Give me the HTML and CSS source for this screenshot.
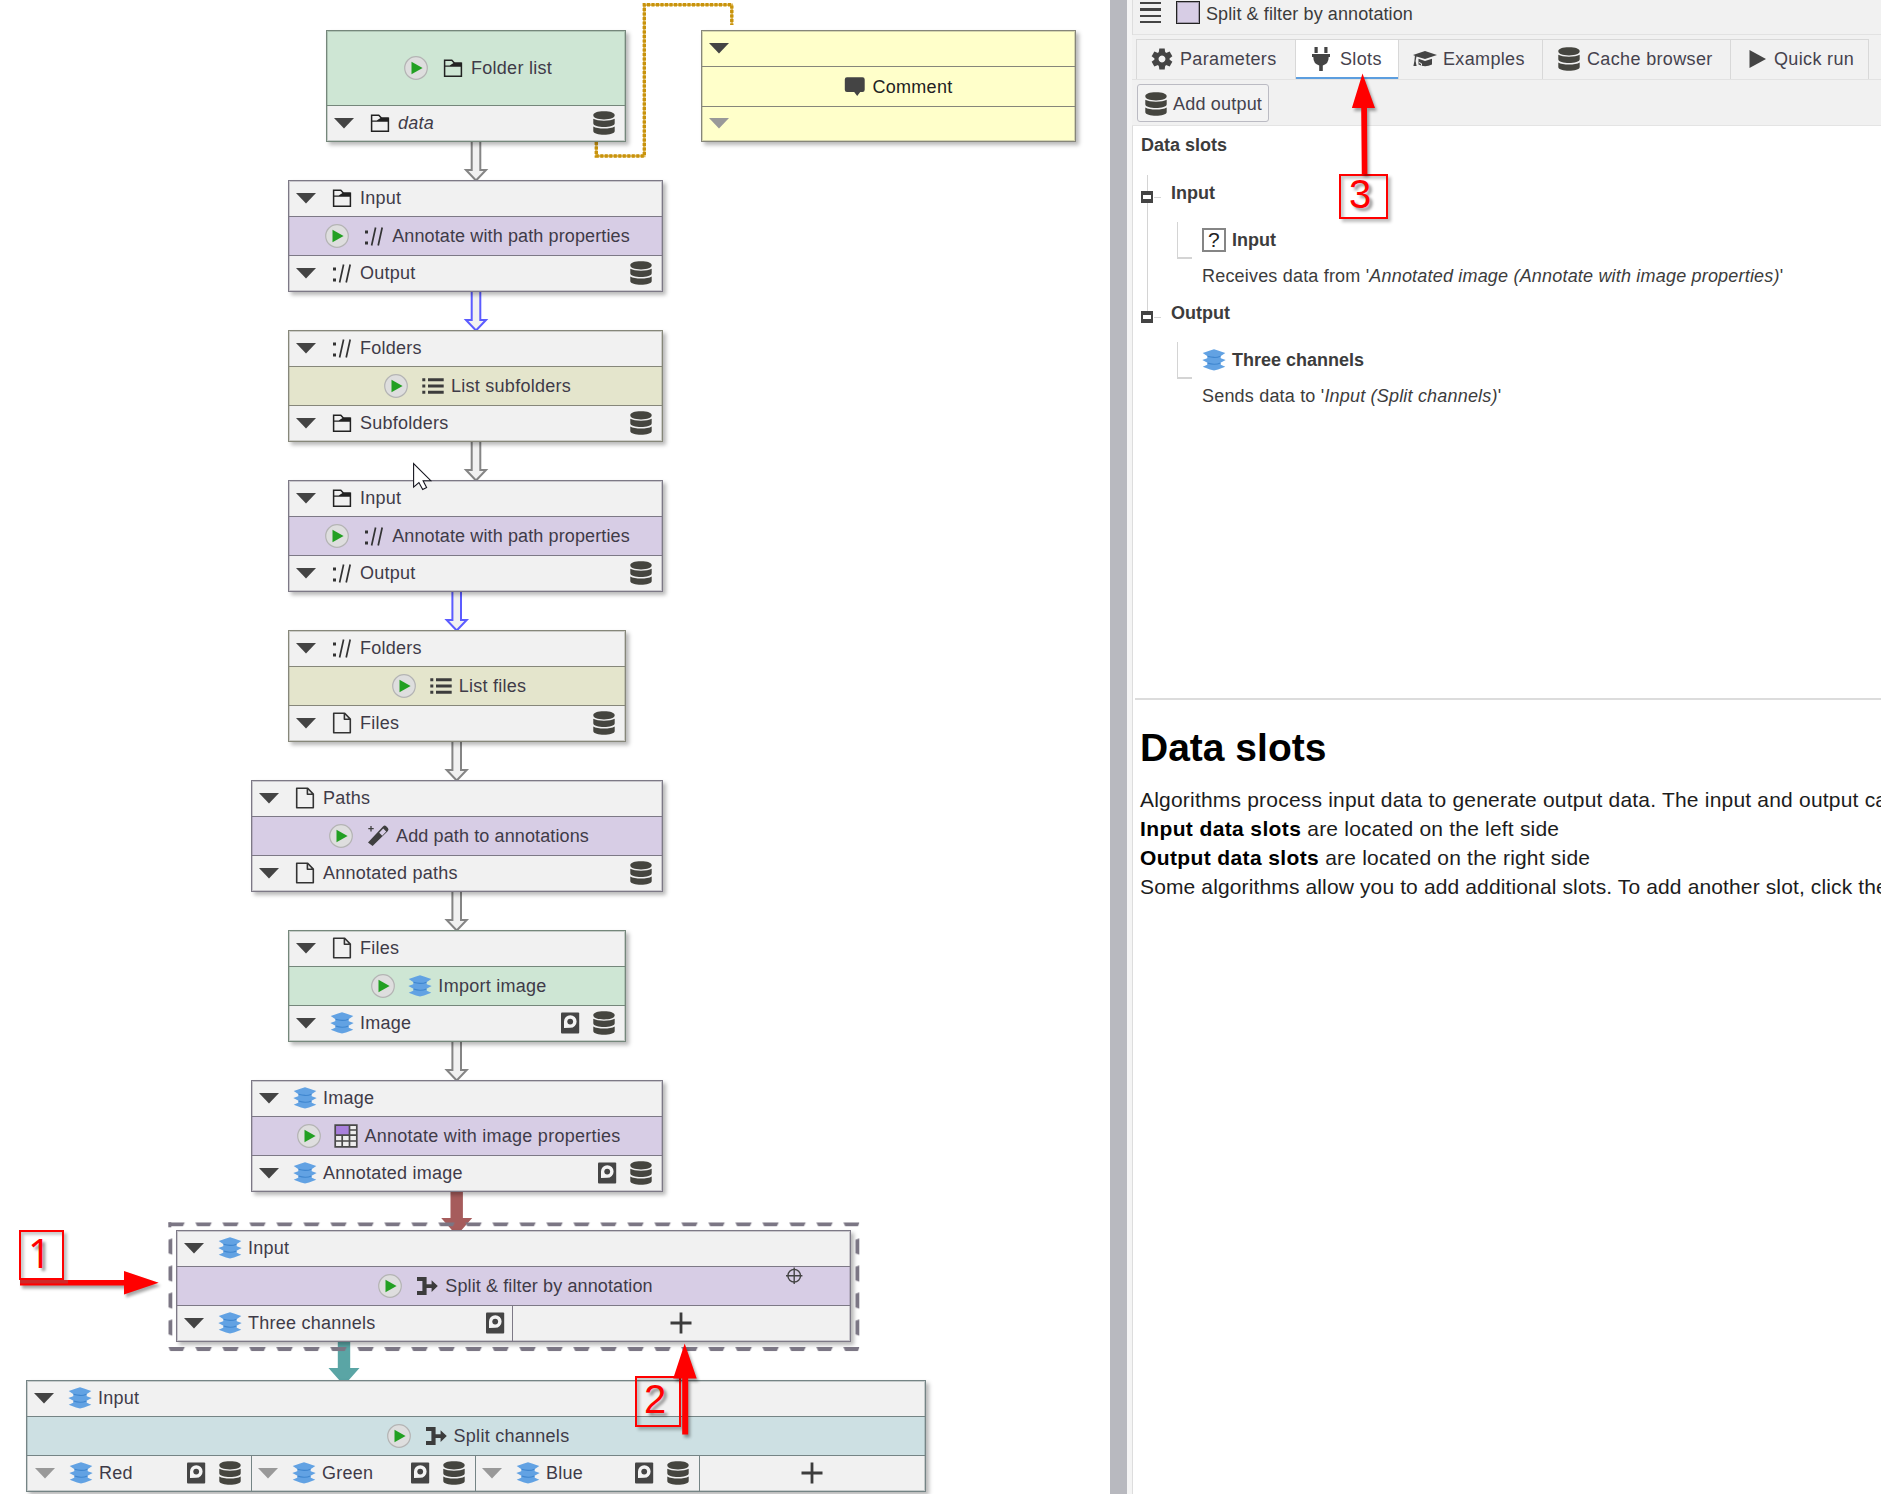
FILE: index.html
```html
<!DOCTYPE html>
<html lang="en">
<head>
<meta charset="utf-8">
<title>Pipeline editor</title>
<link rel="stylesheet" href="styles.css">
</head>
<body>
<svg class="defs" aria-hidden="true">
  <defs>
    <symbol id="i-tri" viewBox="0 0 24 24"><path d="M2 7h20L12 17.500z"/></symbol>
    <symbol id="i-folder" viewBox="0 0 24 24"><path fill="none" stroke="#222" stroke-width="1.5" d="M3.6 20.2V4.2h7.2l2.8 3h6.8v13z"/><path fill="#222" d="M3.5 9.6h5.2l4.6-3.2h7.3v4.4H9.2L3.5 10.8z"/></symbol>
    <symbol id="i-path" viewBox="0 0 24 24"><path fill="#333" d="M3 6.5h3v3H3zM3 17.5h3v3H3z"/><path fill="none" stroke="#333" stroke-width="1.7" d="M9.600 21.500L13.600 3.500M16.200 21.500L20.200 3.500"/></symbol>
    <symbol id="i-file" viewBox="0 0 24 24"><path fill="none" stroke="#333" stroke-width="1.6" stroke-linejoin="round" d="M3.7 2.3h11l5.6 5.8v13.6H3.7zM14.4 2.3v6h6"/></symbol>
    <symbol id="i-stack" viewBox="0 0 24 24"><path fill="#62a2e3" d="M12 1.200L16 2.500Q19.500 3.800 23.300 5L18.500 8.200 18.800 10.200 23.700 12 18.500 14.800 18.800 16.800 23.300 18.800 16 21.400 12 22.600 8 21.400.7 18.800 5.200 16.800 5.500 14.800.3 12 5.200 10.200 5.500 8.200.7 5Q4.500 3.800 8 2.500z"/><path fill="none" stroke="#3f86cf" stroke-width="1.100" d="M5.500 8.200Q9 9.200 12 9.400T18.500 8.200M5.500 14.900Q9 16 12 16.200T18.500 14.900"/></symbol>
    <symbol id="i-db" viewBox="0 0 24 24"><path fill="#45453f" d="M1.3 4.3C1.3 1.8 5.5.3 12 .3s10.700 1.500 10.700 4S18.500 8.400 12 8.400 1.300 6.800 1.300 4.300zM1.300 7.700C5.500 10.300 18.500 10.300 22.700 7.700v4.500c0 5-21.400 5-21.400 0zM1.300 15.400C5.500 18.200 18.500 18.200 22.700 15.400v4.500c0 5-21.400 5-21.400 0z"/></symbol>
    <symbol id="i-cache" viewBox="0 0 24 24"><rect x="3" y="1.500" width="18.200" height="21" rx="1" fill="#454545"/><path fill="#f4f4f4" d="M6 17V10.500a6.300 6.300 0 1 1 6.300 6.300z"/><circle cx="12.200" cy="10.600" r="2.900" fill="#454545"/></symbol>
    <symbol id="i-play" viewBox="0 0 24 24"><circle cx="12" cy="12" r="11.300" fill="#dedede" stroke="#b4b4b4" stroke-width="1.200"/><path fill="#22a022" d="M7.500 5.800L18.600 12 7.500 18.200z"/></symbol>
    <symbol id="i-list" viewBox="0 0 24 24"><path fill="#3c3c3c" d="M1.300 4.200h3v3h-3zM1.300 10.500h3v3h-3zM1.300 16.800h3v3h-3zM7 4.200h15.700v3H7zM7 10.500h15.700v3H7zM7 16.800h15.700v3H7z"/></symbol>
    <symbol id="i-wand" viewBox="0 0 24 24"><path fill="#3f3f3f" fill-rule="evenodd" d="M2 18.500L17.200 2.200q1.500-1.300 3 0l1.700 1.700q1.200 1.500 0 3L6.600 22zM13.200 8.800l3 3 4-4.400-3-3z"/><path fill="none" stroke="#3f3f3f" stroke-width="1.300" d="M5 2v5.500M2.300 4.700h5.400"/></symbol>
    <symbol id="i-table" viewBox="0 0 24 24"><path fill="#eee" d="M1 1h22v22H1z"/><path fill="#a880dc" d="M1 1h14.500v10H1z"/><path fill="none" stroke="#4a4a4a" stroke-width="1.700" d="M1.200 1.200h21.600v21.600H1.200zM15.500 1v22M8.200 11v12M1 11.200h22M15.500 6h7.500M1 17h22"/></symbol>
    <symbol id="i-split" viewBox="0 0 24 24"><path fill="#3c3c3c" d="M2 3h9.600v7.200h5V6.200L22.800 12l-6.200 6v-4h-5v7H2v-4h5.400V7H2z"/></symbol>
    <symbol id="i-plus" viewBox="0 0 24 24"><path fill="#3c3c3c" d="M10.600 1.500h2.800v9.100h9.100v2.800h-9.100v9.100h-2.800v-9.100H1.500v-2.800h9.100z"/></symbol>
    <symbol id="i-comment" viewBox="0 0 24 24"><path fill="#444" d="M4 2.200h15.500q2.200 0 2.200 2.200v10.400q0 2.200-2.200 2.200h-2.300l-3 4-3-4H4q-2.200 0-2.200-2.200V4.400Q1.800 2.200 4 2.200z"/></symbol>
    <symbol id="i-gear" viewBox="0 0 24 24"><g fill="#444"><path fill-rule="evenodd" d="M12 4.500a7.500 7.500 0 1 0 .01 0zM12 8.600a3.400 3.400 0 1 1-.01 0z"/><path id="tooth" d="M9.300 1.600h5.400l.6 4.500H8.700z"/><use href="#tooth" transform="rotate(60 12 12)"/><use href="#tooth" transform="rotate(120 12 12)"/><use href="#tooth" transform="rotate(180 12 12)"/><use href="#tooth" transform="rotate(240 12 12)"/><use href="#tooth" transform="rotate(300 12 12)"/></g></symbol>
    <symbol id="i-plug" viewBox="0 0 24 24"><path fill="#444" d="M5.500 0h3.200v6H5.500zM15.300 0h3.200v6h-3.200zM3 7h18v3h-1.300q0 7-5.900 8.400V24h-3.600v-5.600Q4.300 17 4.300 10H3z"/></symbol>
    <symbol id="i-cap" viewBox="0 0 24 24"><path fill="#444" d="M12 4l12 4-12 4L3.500 9.400 2.600 14l1 5H.4l1-5 .5-5.200L0 8zM5.500 11.700L12 14l7-2.300v5.800q-7 3.600-13.500 0z"/><path fill="none" stroke="#f1f1f1" stroke-width="1" d="M6 15.500l2.500 1.200v2"/></symbol>
    <symbol id="i-run" viewBox="0 0 24 24"><path fill="#444" d="M5.500 3l16.500 9L5.500 21z"/></symbol>
  </defs>
</svg>

<div class="app">
<main class="canvas">
  <svg class="edges" width="1110" height="1494" viewBox="0 0 1110 1494">
    <defs>
      <g id="arrow"><path fill="#f1f1f1" stroke="none" d="M-4.500 0h9v29h5.500L0 40-10 29h5.500z"/><path fill="none" stroke-width="2" d="M-4.300 0v29h-5.700L0 39.500 10 29H4.300V0"/></g>
      <g id="solid"><path d="M-6.200 0H6.200v27h9.300L4 40H-4L-15.500 27h9.300z"/></g>
    </defs>
    <g stroke="#858585">
      <use href="#arrow" x="476" y="141"/><use href="#arrow" x="476" y="441"/><use href="#arrow" x="456.700" y="741"/><use href="#arrow" x="456.700" y="891"/><use href="#arrow" x="456.700" y="1041"/>
    </g>
    <g stroke="#5c5cff"><use href="#arrow" x="476" y="291"/><use href="#arrow" x="456.700" y="591"/></g>
    <use href="#solid" x="456.700" y="1191" fill="#a65c5c"/>
    <use href="#solid" x="344" y="1341" fill="#5aa5a5"/>
    <path fill="none" stroke="#dfb95c" stroke-width="2.500" d="M596.300 142v14H644.300V4.700h87.500V25"/>
    <path fill="none" stroke="#c8930c" stroke-width="3.400" stroke-dasharray="3 1.500" d="M596.300 142v14H644.300V4.700h87.500V25"/>
  </svg>

  <section class="node green n0">
    <div class="mid"><svg class="i"><use href="#i-play"/></svg><svg class="i gap"><use href="#i-folder"/></svg><span>Folder list</span></div>
    <div class="row"><svg class="i tri"><use href="#i-tri"/></svg><svg class="i"><use href="#i-folder"/></svg><span class="lab"><i>data</i></span><svg class="i"><use href="#i-db"/></svg></div>
  </section>
  <section class="node comment n1">
    <div class="row"><svg class="i tri"><use href="#i-tri"/></svg></div>
    <div class="mid"><svg class="i"><use href="#i-comment"/></svg><span>Comment</span></div>
    <div class="row"><svg class="i tri off"><use href="#i-tri"/></svg></div>
  </section>
  <section class="node purple n2">
    <div class="row"><svg class="i tri"><use href="#i-tri"/></svg><svg class="i"><use href="#i-folder"/></svg><span class="lab">Input</span></div>
    <div class="mid snug"><svg class="i"><use href="#i-play"/></svg><svg class="i gap"><use href="#i-path"/></svg><span>Annotate with path properties</span></div>
    <div class="row"><svg class="i tri"><use href="#i-tri"/></svg><svg class="i"><use href="#i-path"/></svg><span class="lab">Output</span><svg class="i"><use href="#i-db"/></svg></div>
  </section>
  <section class="node olive n3">
    <div class="row"><svg class="i tri"><use href="#i-tri"/></svg><svg class="i"><use href="#i-path"/></svg><span class="lab">Folders</span></div>
    <div class="mid"><svg class="i"><use href="#i-play"/></svg><svg class="i gap"><use href="#i-list"/></svg><span>List subfolders</span></div>
    <div class="row"><svg class="i tri"><use href="#i-tri"/></svg><svg class="i"><use href="#i-folder"/></svg><span class="lab">Subfolders</span><svg class="i"><use href="#i-db"/></svg></div>
  </section>
  <section class="node purple n4">
    <div class="row"><svg class="i tri"><use href="#i-tri"/></svg><svg class="i"><use href="#i-folder"/></svg><span class="lab">Input</span></div>
    <div class="mid snug"><svg class="i"><use href="#i-play"/></svg><svg class="i gap"><use href="#i-path"/></svg><span>Annotate with path properties</span></div>
    <div class="row"><svg class="i tri"><use href="#i-tri"/></svg><svg class="i"><use href="#i-path"/></svg><span class="lab">Output</span><svg class="i"><use href="#i-db"/></svg></div>
  </section>
  <section class="node olive n5">
    <div class="row"><svg class="i tri"><use href="#i-tri"/></svg><svg class="i"><use href="#i-path"/></svg><span class="lab">Folders</span></div>
    <div class="mid"><svg class="i"><use href="#i-play"/></svg><svg class="i gap"><use href="#i-list"/></svg><span>List files</span></div>
    <div class="row"><svg class="i tri"><use href="#i-tri"/></svg><svg class="i"><use href="#i-file"/></svg><span class="lab">Files</span><svg class="i"><use href="#i-db"/></svg></div>
  </section>
  <section class="node purple n6">
    <div class="row"><svg class="i tri"><use href="#i-tri"/></svg><svg class="i"><use href="#i-file"/></svg><span class="lab">Paths</span></div>
    <div class="mid snug"><svg class="i"><use href="#i-play"/></svg><svg class="i gap"><use href="#i-wand"/></svg><span>Add path to annotations</span></div>
    <div class="row"><svg class="i tri"><use href="#i-tri"/></svg><svg class="i"><use href="#i-file"/></svg><span class="lab">Annotated paths</span><svg class="i"><use href="#i-db"/></svg></div>
  </section>
  <section class="node green n7">
    <div class="row"><svg class="i tri"><use href="#i-tri"/></svg><svg class="i"><use href="#i-file"/></svg><span class="lab">Files</span></div>
    <div class="mid"><svg class="i"><use href="#i-play"/></svg><svg class="i gap"><use href="#i-stack"/></svg><span>Import image</span></div>
    <div class="row"><svg class="i tri"><use href="#i-tri"/></svg><svg class="i"><use href="#i-stack"/></svg><span class="lab">Image</span><svg class="i cache"><use href="#i-cache"/></svg><svg class="i"><use href="#i-db"/></svg></div>
  </section>
  <section class="node purple n8">
    <div class="row"><svg class="i tri"><use href="#i-tri"/></svg><svg class="i"><use href="#i-stack"/></svg><span class="lab">Image</span></div>
    <div class="mid"><svg class="i"><use href="#i-play"/></svg><svg class="i gap"><use href="#i-table"/></svg><span>Annotate with image properties</span></div>
    <div class="row"><svg class="i tri"><use href="#i-tri"/></svg><svg class="i"><use href="#i-stack"/></svg><span class="lab">Annotated image</span><svg class="i cache"><use href="#i-cache"/></svg><svg class="i"><use href="#i-db"/></svg></div>
  </section>
  <section class="node purple n9">
    <div class="row"><svg class="i tri"><use href="#i-tri"/></svg><svg class="i"><use href="#i-stack"/></svg><span class="lab">Input</span></div>
    <div class="mid snug"><svg class="i"><use href="#i-play"/></svg><svg class="i gap"><use href="#i-split"/></svg><span>Split &amp; filter by annotation</span></div>
    <div class="cells split2">
      <div class="row tight"><svg class="i tri"><use href="#i-tri"/></svg><svg class="i"><use href="#i-stack"/></svg><span class="lab">Three channels</span><svg class="i"><use href="#i-cache"/></svg></div>
      <div class="add"><svg class="i"><use href="#i-plus"/></svg></div>
    </div>
  </section>
  <section class="node teal n10">
    <div class="row"><svg class="i tri"><use href="#i-tri"/></svg><svg class="i"><use href="#i-stack"/></svg><span class="lab">Input</span></div>
    <div class="mid"><svg class="i"><use href="#i-play"/></svg><svg class="i gap"><use href="#i-split"/></svg><span>Split channels</span></div>
    <div class="cells split4">
      <div class="row first"><svg class="i tri off"><use href="#i-tri"/></svg><svg class="i"><use href="#i-stack"/></svg><span class="lab">Red</span><svg class="i cache"><use href="#i-cache"/></svg><svg class="i"><use href="#i-db"/></svg></div>
      <div class="row"><svg class="i tri off"><use href="#i-tri"/></svg><svg class="i"><use href="#i-stack"/></svg><span class="lab">Green</span><svg class="i cache"><use href="#i-cache"/></svg><svg class="i"><use href="#i-db"/></svg></div>
      <div class="row"><svg class="i tri off"><use href="#i-tri"/></svg><svg class="i"><use href="#i-stack"/></svg><span class="lab">Blue</span><svg class="i cache"><use href="#i-cache"/></svg><svg class="i"><use href="#i-db"/></svg></div>
      <div class="add"><svg class="i"><use href="#i-plus"/></svg></div>
    </div>
  </section>

  <svg class="edges" width="1110" height="1494" viewBox="0 0 1110 1494">
    <defs>
      <pattern id="dh" patternUnits="userSpaceOnUse" x="168.300" y="1222.300" width="27" height="124.700"><path fill="#7b7684" d="M0 0h16.500l-2 4.300H2z"/></pattern>
      <pattern id="dv" patternUnits="userSpaceOnUse" x="168.300" y="1238.300" width="687" height="27"><path fill="#7b7684" d="M0 1.500L4.300 0v16.500L0 15z"/></pattern>
    </defs>
    <path fill="url(#dh)" d="M168.300 1222.300h691v4.300h-691zM168.300 1347h691v4.300h-691z"/>
    <path fill="url(#dv)" d="M168.300 1236h4.300v102h-4.300zM855.300 1236h4.300v102h-4.300z"/>
    <path fill="#7b7684" d="M168.300 1222.300h3v5h-3z"/>
    <g fill="none" stroke="#444" stroke-width="1.400"><circle cx="794.200" cy="1275.700" r="6.300"/><path d="M786 1275.700h16.400M794.200 1267.500v16.400"/></g>
    <path fill="#fff" stroke="#15151f" stroke-width="1.100" d="M413.600 463.500v23.600l5.300-4.600 3.800 7 3.900-2-3.500-6.800h7.700z"/>
  </svg>
</main>

<div class="splitter"></div>

<aside class="panel">
  <header class="title"><span class="menu"><b></b><b></b><b></b><b></b></span><span class="swatch"></span><span>Split &amp; filter by annotation</span></header>
  <nav class="tabs">
    <a class="tab t1"><svg class="i"><use href="#i-gear"/></svg><span>Parameters</span></a>
    <a class="tab t2"><svg class="i"><use href="#i-plug"/></svg><span>Slots</span></a>
    <a class="tab t3"><svg class="i"><use href="#i-cap"/></svg><span>Examples</span></a>
    <a class="tab t4"><svg class="i"><use href="#i-db"/></svg><span>Cache browser</span></a>
    <a class="tab t5"><svg class="i"><use href="#i-run"/></svg><span>Quick run</span></a>
  </nav>
  <div class="toolbar"><button class="btn"><svg class="i"><use href="#i-db"/></svg><span>Add output</span></button></div>
  <div class="tree">
    <h2>Data slots</h2>
    <div class="group joined">
      <h3><span class="fold"></span>Input</h3>
      <div class="leaf"><span class="elbow"></span><span class="unknown">?</span><b>Input</b></div>
      <p>Receives data from '<i>Annotated image (Annotate with image properties)</i>'</p>
    </div>
    <div class="group">
      <h3><span class="fold"></span>Output</h3>
      <div class="leaf"><span class="elbow"></span><svg class="i"><use href="#i-stack"/></svg><b>Three channels</b></div>
      <p>Sends data to '<i>Input (Split channels)</i>'</p>
    </div>
  </div>
  <article class="help">
    <h1>Data slots</h1>
    <p>Algorithms process input data to generate output data. The input and output ca</p>
    <p><b>Input data slots</b> are located on the left side</p>
    <p><b>Output data slots</b> are located on the right side</p>
    <p class="last">Some algorithms allow you to add additional slots. To add another slot, click the</p>
  </article>
</aside>
</div>

<div class="mark m1">1</div>
<div class="mark m2">2</div>
<div class="mark m3">3</div>
<svg class="pointers" width="1881" height="1494" viewBox="0 0 1881 1494">
  <g fill="#f00">
    <path d="M20 1280h104v-9l34.700 11.700L124 1294.500v-9H20z"/>
    <path d="M684.700 1343.500l12 35h-8.500v56h-6v-56h-9z"/>
    <path d="M1362.500 73.500l12.500 34.500h-8l.4 66h-5.600l-.6-66h-9.300z"/>
  </g>
  <path fill="#b93a3a" opacity=".7" d="M20 1280h48v3.500H20z"/>
</svg>
</body>
</html>
```

FILE: styles.css
```css
* { box-sizing: border-box; }
body { margin: 0; overflow: hidden; background: #fff; color: #3c3c3c; font: 18px/22px "Liberation Sans", Arial, sans-serif; letter-spacing: .1px; }
h1, h2, h3, p { margin: 0; }
.defs { position: absolute; width: 0; height: 0; }
.i { width: 24px; height: 24px; flex: none; display: block; }
.app { display: flex; width: 1881px; height: 1494px; overflow: hidden; }

/* pipeline canvas */
.canvas { position: relative; width: 1110px; flex: none; }
.edges { position: absolute; left: 0; top: 0; }
.node { --line: #7d7986; --fill: #d7cde5; position: absolute; height: 112px; display: flex; flex-direction: column; border: 1px solid var(--line); outline: 1px solid color-mix(in srgb, var(--line) 35%, transparent); outline-offset: -2px; background: #f1f1f1; box-shadow: 3px 3px 4px rgba(0,0,0,.28); color: #3f3b48; }
.green { --line: #75877b; --fill: #cee6d4; }
.olive { --line: #86877a; --fill: #e4e5cc; }
.teal { --line: #758485; --fill: #cde0e3; }
.comment { --line: #86867a; --fill: #ffffca; background: #ffffca; color: #222; }
.row { height: 35px; display: flex; align-items: center; padding: 0 9px 2px 5px; }
.row .tri { margin-right: 12px; fill: #444; }
.row .off { fill: #999; }
.lab { flex: 1; padding-left: 6px; letter-spacing: .25px; }
.cache { margin-right: 10px; }
.mid { flex: 1; display: flex; align-items: center; justify-content: center; padding: 0 0 1px 4px; border-bottom: 1px solid var(--line); background: var(--fill); letter-spacing: .27px; }
.snug { letter-spacing: .12px; }
.row + .mid { border-top: 1px solid var(--line); }
.mid span { padding-left: 6px; }
.mid .gap { margin-left: 13px; }
.cells { height: 35px; display: grid; }
.cells > * + * { border-left: 1px solid var(--line); }
.split2 { grid-template-columns: 335px 1fr; }
.split4 { grid-template-columns: 224px 224px 224px 1fr; }
.split4 .row { padding-left: 4px; }
.split4 .first { padding-left: 6px; }
.row.tight { padding-right: 5px; }
.add { display: flex; align-items: center; justify-content: center; padding: 0 2px 2px 0; }
.n0 { left: 326px; top: 30px; width: 300px; }
.n1 { left: 701px; top: 30px; width: 375px; }
.n1 .mid { padding: 0 0 0 18px; }
.n1 .mid + .row { height: 34px; }
.n2 { left: 288px; top: 180px; width: 375px; }
.n3 { left: 288px; top: 330px; width: 375px; }
.n4 { left: 288px; top: 480px; width: 375px; }
.n5 { left: 288px; top: 630px; width: 338px; }
.n6 { left: 251px; top: 780px; width: 412px; }
.n7 { left: 288px; top: 930px; width: 338px; }
.n8 { left: 251px; top: 1080px; width: 412px; }
.n9 { left: 176px; top: 1230px; width: 675px; }
.n10 { left: 26px; top: 1380px; width: 900px; }

/* side panel */
.splitter { width: 17px; flex: none; background: #b8b9bf; }
.panel { flex: 1; min-width: 0; border-left: 5px solid #f4f4f4; box-shadow: inset 1px 0 #ddd; display: flex; flex-direction: column; white-space: nowrap; }
.title { height: 35px; display: flex; align-items: center; padding: 0 0 7px 7px; background: #f1f1f1; border-bottom: 1px solid #e2e2e2; margin-left: 1px; }
.menu { width: 21px; display: grid; gap: 4px; margin-right: 15px; padding-bottom: 2px; }
.menu b { height: 2.400px; background: #444; }
.swatch { width: 24px; height: 23px; margin: 0 6px 3px 0; border: 1px solid #222; outline: 1px solid rgba(34,34,34,.3); outline-offset: -2px; background: #d7cde5; }
.tabs { height: 45px; display: flex; padding: 4px 0 0 4px; background: #f1f1f1; border-bottom: 1px solid #e2e2e2; }
.tab { display: flex; align-items: center; padding-bottom: 2px; border: 1px solid #d8d8d8; border-width: 1px 0 0 1px; color: #45424d; letter-spacing: .35px; }
.tab .i { margin-right: 6px; }
.t1 { width: 159px; padding-left: 13px; }
.t2 { width: 103px; padding-left: 13px; background: #fff; box-shadow: inset 0 -2px #5c9edf; }
.t2 .i { margin-right: 7px; }
.t3 { width: 144px; padding-left: 14px; }
.t4 { width: 188px; padding-left: 14px; }
.t5 { width: 139px; padding-left: 13px; border-right-width: 1px; }
.toolbar { height: 46px; padding: 4px 5px; background: #f1f1f1; border-bottom: 1px solid #e4e4e4; }
.btn { width: 132px; height: 38px; display: flex; align-items: center; gap: 5px; padding: 1px 0 0 6px; border: 1px solid #bbbbc3; border-radius: 3px; background: #f3f3f3; color: #45424d; font: inherit; letter-spacing: .2px; }
.tree { height: 574px; padding: 7px 0 0 6px; border-bottom: 2px solid #dcdcdc; margin-left: 3px; }
.tree h2, .tree h3 { font-size: 18px; line-height: 22px; letter-spacing: 0; }
.tree h2 { margin-bottom: 19px; padding-top: 1px; height: 23px; }
.group { position: relative; height: 120px; }
.joined::before { content: ""; position: absolute; left: 6px; top: 0; width: 1px; height: 140px; background: #d4d4d4; }
.group h3 { display: flex; align-items: center; padding: 6px 0 0 30px; height: 30px; position: relative; }
.fold { position: absolute; left: 0; top: 16px; width: 12px; height: 12px; border: solid #444; border-width: 4px 2px; background: #fff; }
.fold::after { content: ""; position: absolute; left: 11px; top: 2px; width: 7px; height: 1px; background: #d4d4d4; }
.leaf { display: flex; align-items: center; padding: 10px 0 0 36px; height: 56px; }
.leaf b { letter-spacing: 0; padding-left: 6px; margin-top: 4px; }
.elbow { width: 15px; height: 37px; margin: 4px 10px 0 0; border: solid #d4d4d4; border-width: 0 0 2px 1px; }
.leaf .i, .unknown { margin-top: 3px; }
.unknown { width: 24px; height: 24px; border: 2px solid #858585; background: #fff; font-size: 21px; line-height: 20px; text-align: center; color: #222; }
.group p { padding-left: 61px; padding-top: 4px; letter-spacing: .19px; }
.help { padding: 26px 0 0 8px; color: #1c1c1c; font-size: 21px; line-height: 29px; letter-spacing: .2px; }
.help h1 { font-size: 39px; line-height: 44px; color: #000; letter-spacing: 0; margin-bottom: 15px; }
.help b { color: #000; letter-spacing: .38px; }
.help .last { letter-spacing: .13px; }

/* callouts laid over the page */
.mark { position: absolute; border: 2px solid #f00; color: #f00; font-size: 40px; line-height: 44px; text-shadow: 3px 3px 3px rgba(0,0,0,.4); box-shadow: 3px 3px 3px rgba(0,0,0,.25), inset 3px 3px 3px rgba(0,0,0,.2); letter-spacing: 0; }
.m1 { left: 19px; top: 1230px; width: 45px; height: 50px; padding-left: 7px; line-height: 41px; font-family: "Noto Sans", "Open Sans", sans-serif; background: #fff; }
.m2 { left: 635px; top: 1376px; width: 46px; height: 51px; padding-left: 7px; line-height: 42px; }
.m3 { left: 1339px; top: 174px; width: 49px; height: 45px; padding-left: 8px; line-height: 37px; background: #fff; }
.pointers { position: absolute; left: 0; top: 0; filter: drop-shadow(2px 3px 1.500px rgba(0,0,0,.35)); }
```
